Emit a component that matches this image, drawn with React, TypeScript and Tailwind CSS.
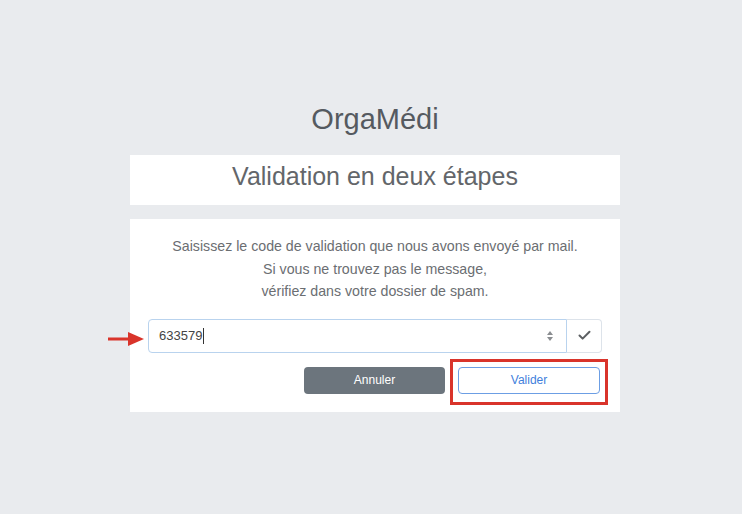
import { Check } from "lucide-react"

export default function App() {
  return (
    <div className="min-h-[514px] w-full bg-[#e9ebee] font-['Liberation_Sans',Arial,sans-serif]">
      <div className="ml-[130px] w-[490px] pt-[102px]">
        <h1 className="text-center text-[29px] leading-[34px] text-[#555a60]">OrgaMédi</h1>

        {/* Header card */}
        <div className="mt-[19px] flex h-[50px] items-center justify-center bg-white pb-[6px]">
          <h2 className="text-[25px] text-[#63666a]">Validation en deux étapes</h2>
        </div>

        {/* Body card */}
        <div className="mt-[14px] bg-white px-[18px] pb-[18px] pt-[16px]">
          <p className="text-center text-[14.2px] leading-[22.5px] text-[#6b6e72]">
            Saisissez le code de validation que nous avons envoyé par mail.
            <br />
            Si vous ne trouvez pas le message,
            <br />
            vérifiez dans votre dossier de spam.
          </p>

          <div className="relative mt-[16px] flex h-[34px]">
            {/* annotation arrow */}
            <svg
              className="absolute left-[-40px] top-[13px]"
              width="36"
              height="14"
              viewBox="0 0 36 14"
            >
              <rect x="0" y="5.5" width="22" height="3" fill="#d9342b" />
              <polygon points="20,0 36,7 20,14" fill="#d9342b" />
            </svg>
            <div className="flex flex-1 items-center rounded-l-[4px] border border-[#b9d3ee] pl-[10px] pr-[10px]">
              <span className="text-[13px] text-[#444]">633579</span>
              <span className="ml-[1px] h-[16px] w-px bg-[#333]" />
              <span className="flex-1" />
              <svg width="8" height="12" viewBox="0 0 8 12" className="mr-[2px]">
                <polygon points="4,1 7,5 1,5" fill="#8a8d90" />
                <polygon points="1,7 7,7 4,11" fill="#8a8d90" />
              </svg>
            </div>
            <div className="flex w-[35px] items-center justify-center rounded-r-[4px] border border-l-0 border-[#dde3ea]">
              <Check className="size-[15px] text-[#5c5f62]" strokeWidth={3.2} />
            </div>
          </div>

          <div className="mt-[14px] flex justify-end gap-[13px] pr-[2px]">
            <button className="h-[27px] w-[141px] rounded-[4px] bg-[#6c757d] text-[12px] text-white">
              Annuler
            </button>
            <div className="relative">
              <button className="h-[27px] w-[142px] rounded-[4px] border border-[#6c9ee4] bg-white text-[12px] text-[#3f7fdc]">
                Valider
              </button>
              {/* annotation box */}
              <div className="absolute left-[-8px] top-[-8px] h-[46px] w-[158px] border-[3px] border-[#d9342b]" />
            </div>
          </div>
        </div>
      </div>
    </div>
  )
}
